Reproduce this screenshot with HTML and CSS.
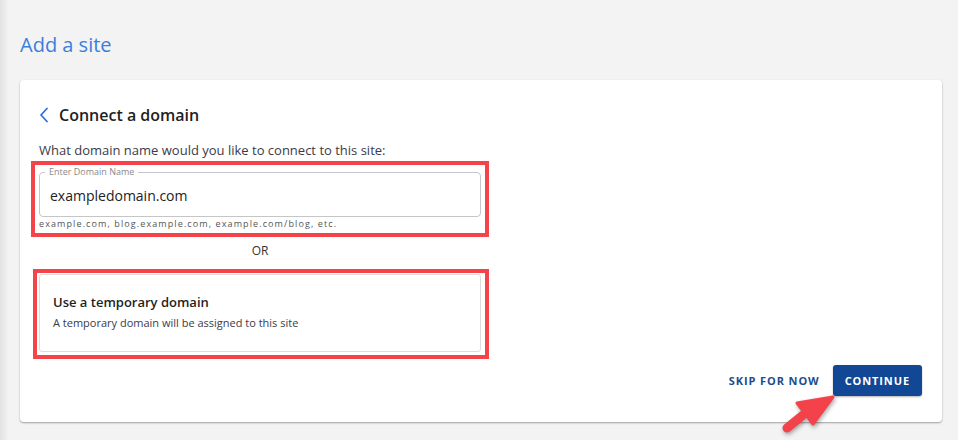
FILE: index.html
```html
<!DOCTYPE html>
<html lang="en">
<head>
    <meta charset="UTF-8">
    <meta name="viewport" content="width=device-width, initial-scale=1.0">
    <title>Add a site</title>
    <link rel="stylesheet" href="styles.css">
</head>
<body>
    <main class="page">
        <h1 class="page-title">Add a site</h1>
        <section class="card">
            <div class="card-head">
                <svg class="back" width="10" height="16" viewBox="0 0 10 16">
                    <path d="M8 1.5 L2 8 L8 14.5" fill="none" stroke="#2b74d8" stroke-width="1.8" stroke-linecap="round" stroke-linejoin="round"/>
                </svg>
                <h2>Connect a domain</h2>
            </div>
            <p class="prompt">What domain name would you like to connect to this site:</p>

            <div class="mark mark-field">
                <fieldset class="field">
                    <legend>Enter Domain Name</legend>
                    <input type="text" value="exampledomain.com">
                </fieldset>
                <div class="hint">example.com, blog.example.com, example.com/blog, etc.</div>
            </div>

            <div class="or">OR</div>

            <div class="mark mark-option">
                <div class="option">
                    <h3>Use a temporary domain</h3>
                    <p>A temporary domain will be assigned to this site</p>
                </div>
            </div>

            <div class="actions">
                <button class="skip">SKIP FOR NOW</button>
                <button class="continue">CONTINUE</button>
            </div>
        </section>
    </main>
    <svg class="pointer" width="90" height="60" viewBox="0 0 90 60">
        <line x1="17" y1="48" x2="38" y2="31" stroke="#f4424a" stroke-width="9" stroke-linecap="round"/>
        <path d="M63 17 L27 23 L43 44 Z" fill="#f4424a" stroke="#f4424a" stroke-width="3" stroke-linejoin="round"/>
    </svg>
</body>
</html>
```

FILE: styles.css
```css
body{
    margin:0;
    padding:0;
    background:linear-gradient(to right, #e2e2e2 0, #f3f3f3 9px) #f3f3f3;
    font-family:'Open Sans', 'Liberation Sans', sans-serif;
    color:#222;
    height:440px;
    overflow:hidden;
}
.page{
    padding:0 16px 0 20px;
}
.page-title{
    margin:0;
    padding-top:31px;
    height:80px;
    box-sizing:border-box;
    font-size:20px;
    line-height:28px;
    font-weight:400;
    color:#3a7fdc;
}
.card{
    background:#fff;
    border-radius:4px;
    box-shadow:0 1px 2px rgba(0,0,0,0.35);
    padding:24px 20px 26px 19px;
}
.card-head{
    display:flex;
    align-items:center;
    gap:10px;
    height:22px;
}
.back{
    display:block;
}
.card-head h2{
    margin:0;
    font-size:16px;
    font-weight:600;
    line-height:22px;
    color:#1f1f1f;
}
.prompt{
    margin:15px 0 0;
    font-size:13px;
    line-height:18px;
    color:#3b3b48;
}
.mark{
    border:4px solid #f5434a;
}
.mark-field{
    width:442px;
    margin:2px 0 0 -8px;
    padding:1px 4px 3px 4px;
}
.field{
    margin:0;
    padding:0 10px 3px;
    border:1px solid #c6c6c6;
    border-radius:4px;
}
.field legend{
    padding:0 4px;
    margin-left:-5px;
    font-size:9px;
    line-height:12px;
    color:#8a8a8a;
}
.field input{
    display:block;
    width:100%;
    height:35px;
    padding:0;
    border:none;
    outline:none;
    font-family:inherit;
    font-size:14px;
    color:#222;
    background:transparent;
}
.hint{
    margin-top:1px;
    font-size:9px;
    line-height:12px;
    letter-spacing:1.1px;
    color:#555;
}
.or{
    width:458px;
    margin:6px 0 0 -8px;
    text-align:center;
    font-size:12px;
    line-height:16px;
    color:#333;
}
.mark-option{
    width:442px;
    margin:10px 0 0 -6px;
    padding:1px 4px 3px 2px;
}
.option{
    border:1px solid #dcdcdc;
    border-radius:3px;
    padding:18px 13px 20px;
}
.option h3{
    margin:0;
    font-size:13px;
    line-height:18px;
    font-weight:600;
    color:#1f1f1f;
}
.option p{
    margin:4px 0 0;
    font-size:11px;
    line-height:16px;
    color:#3b3b48;
}
.actions{
    display:flex;
    justify-content:flex-end;
    align-items:center;
    gap:5px;
    margin-top:6px;
}
.actions button{
    font-family:inherit;
    font-size:11px;
    font-weight:700;
    letter-spacing:0.9px;
    border:none;
    border-radius:3px;
    cursor:pointer;
    height:31px;
}
.skip{
    background:none;
    color:#1c4d8f;
    padding:0 8px;
}
.continue{
    background:#124795;
    color:#fff;
    padding:0 12px;
    box-shadow:0 1px 2px rgba(0,0,0,0.3);
}
.pointer{
    position:absolute;
    left:770px;
    top:380px;
    filter:drop-shadow(1px 2px 2px rgba(0,0,0,0.35));
}
```
